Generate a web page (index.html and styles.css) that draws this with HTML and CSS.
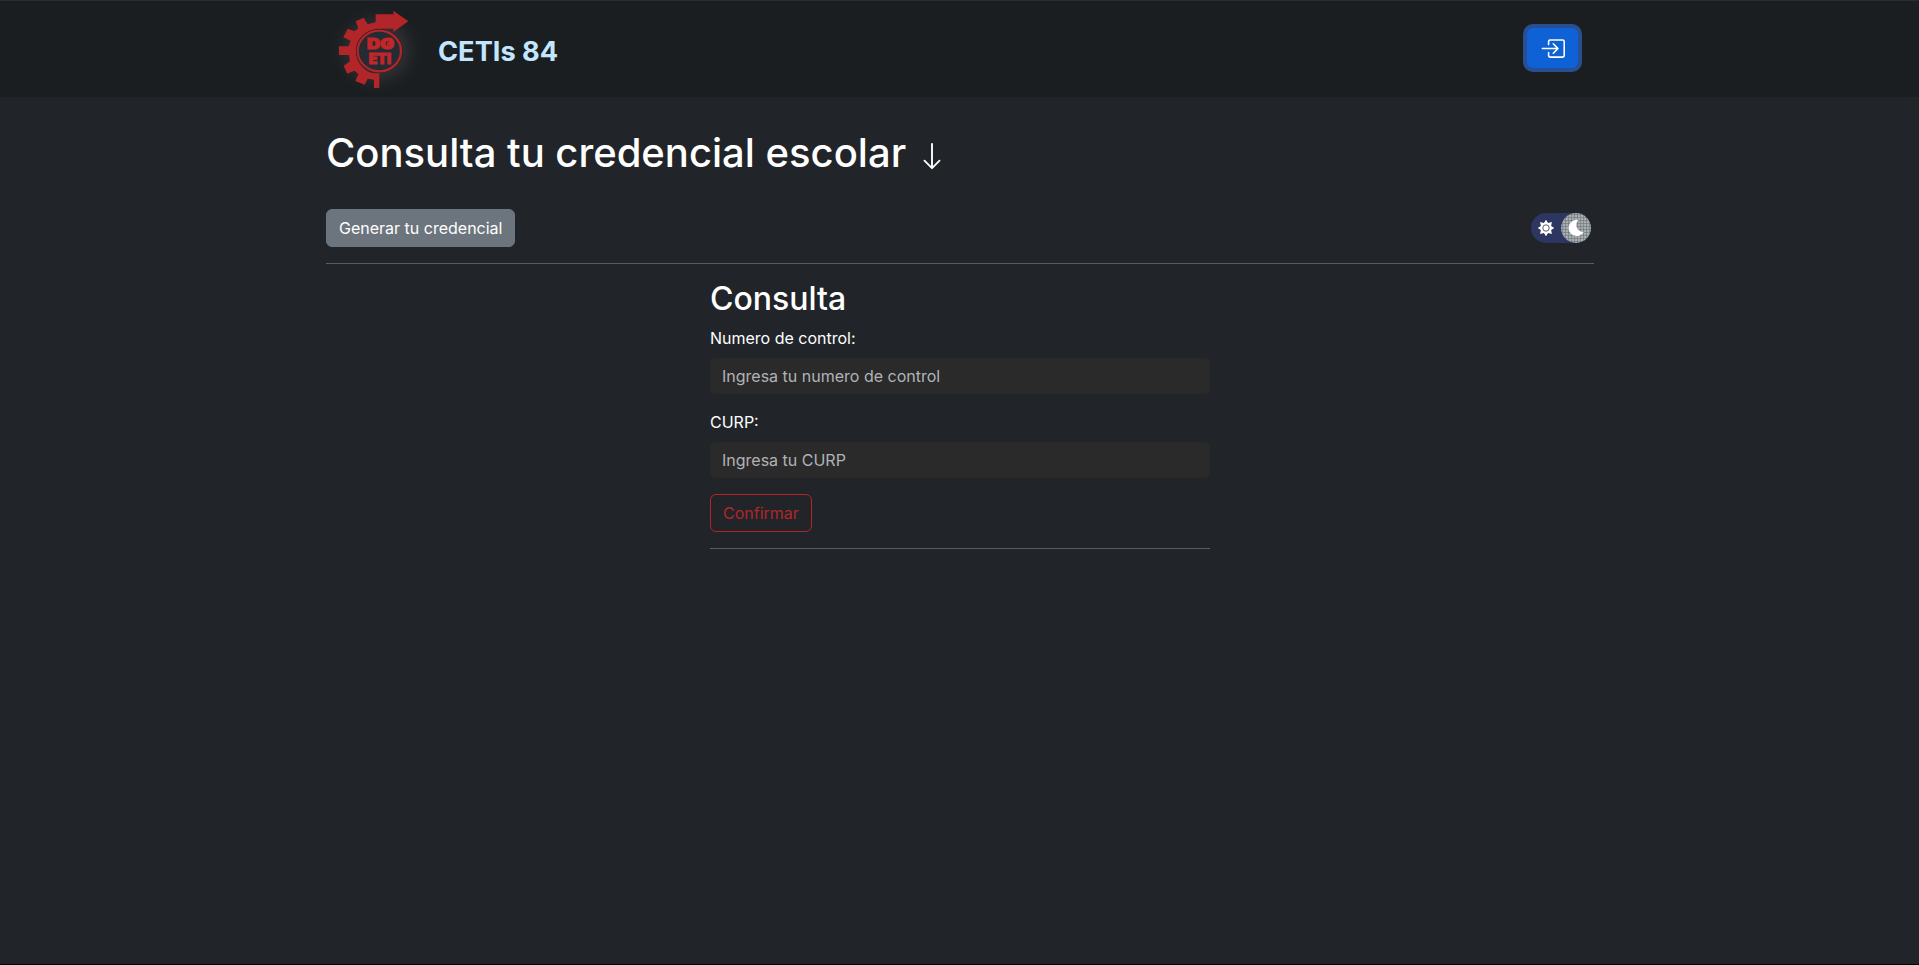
FILE: index.html
```
<!DOCTYPE html>
<html lang="es">
<head>
<meta charset="utf-8">
<title>CETIs 84</title>
<link rel="stylesheet" href="styles.css">
</head>
<body>
<header class="navbar">
  <div class="container navbar-inner">
    <a class="brand">
      <svg class="logo" viewBox="0 0 330 291" aria-hidden="true">
        <defs>
          <radialGradient id="glow">
            <stop offset="0" stop-color="#3c3b3f"/>
            <stop offset=".55" stop-color="#2c2d30"/>
            <stop offset="1" stop-color="#1b1e21" stop-opacity="0"/>
          </radialGradient>
        </defs>
        <ellipse cx="170" cy="150" rx="148" ry="138" fill="url(#glow)"/>
        <path fill="#b22528" d="M167 43H220V32L265 64L220 96V86H177C145 86 108 112 108 153C108 189 135 216 160 220H178V264H162V239L143 236L134 254L106 243L115 222L103 212L82 221L71 197L90 184L87 165H57V139H86L92 122L70 112L83 86L104 94L115 85L107 64L131 53L143 73L167 67Z"/>
        <ellipse cx="178" cy="153" rx="70" ry="66" fill="#1b1e21"/>
        <ellipse cx="178" cy="153" rx="65" ry="61" fill="#242b33" stroke="#b22528" stroke-width="7"/>
        <text class="logo-text" x="141" y="148" textLength="81" lengthAdjust="spacingAndGlyphs">DG</text>
        <text class="logo-text logo-text-small" x="146" y="191" textLength="67" lengthAdjust="spacingAndGlyphs">ETI</text>
      </svg>
      <span class="brand-name">CETIs 84</span>
    </a>
    <button class="login" aria-label="Entrar">
      <svg width="25" height="25" viewBox="0 0 16 16" fill="currentColor"><path fill-rule="evenodd" d="M6 3.5a.5.5 0 0 1 .5-.5h8a.5.5 0 0 1 .5.5v9a.5.5 0 0 1-.5.5h-8a.5.5 0 0 1-.5-.5v-2a.5.5 0 0 0-1 0v2A1.5 1.5 0 0 0 6.5 14h8a1.5 1.5 0 0 0 1.5-1.5v-9A1.5 1.5 0 0 0 14.5 2h-8A1.5 1.5 0 0 0 5 3.5v2a.5.5 0 0 0 1 0z"/><path fill-rule="evenodd" d="M11.854 8.354a.5.5 0 0 0 0-.708l-3-3a.5.5 0 1 0-.708.708L10.293 7.5H1.5a.5.5 0 0 0 0 1h8.793l-2.147 2.146a.5.5 0 0 0 .708.708z"/></svg>
    </button>
  </div>
</header>
<main class="container">
  <h1 class="title">Consulta tu credencial escolar
    <svg class="arrow" width="30" height="30" viewBox="0 0 16 16" fill="currentColor"><path fill-rule="evenodd" d="M8 1a.5.5 0 0 1 .5.5v11.793l3.146-3.147a.5.5 0 0 1 .708.708l-4 4a.5.5 0 0 1-.708 0l-4-4a.5.5 0 0 1 .708-.708L7.5 13.293V1.5A.5.5 0 0 1 8 1"/></svg>
  </h1>
  <div class="toolbar">
    <button class="btn btn-secondary">Generar tu credencial</button>
    <div class="toggle" role="switch" aria-checked="true">
      <svg class="sun" width="18" height="18" viewBox="0 0 18 18"><path fill="#fff" d="M9 .7 11.1 3.9 14.9 3.1 14.1 6.9 17.3 9 14.1 11.1 14.9 14.9 11.1 14.1 9 17.3 6.9 14.1 3.1 14.9 3.9 11.1.7 9 3.9 6.9 3.1 3.1 6.9 3.9Z"/><circle cx="9" cy="9" r="3.2" fill="#fff" stroke="#5a6172" stroke-width="1"/></svg>
      <span class="ball"><svg width="18" height="18" viewBox="0 0 18 18"><path fill="#fff" d="M11.3 1A8.1 8.1 0 1 0 16.7 13A7.1 7.1 0 0 1 11.3 1Z"/></svg></span>
    </div>
  </div>
  <form class="form">
    <h2 class="form-title">Consulta</h2>
    <label class="label" for="control">Numero de control:</label>
    <input class="input" id="control" type="text" placeholder="Ingresa tu numero de control">
    <label class="label" for="curp">CURP:</label>
    <input class="input" id="curp" type="text" placeholder="Ingresa tu CURP">
    <div class="actions"><button class="btn btn-outline" type="button">Confirmar</button></div>
  </form>
</main>
</body>
</html>
```
FILE: styles.css
```
* { box-sizing: border-box; }
body {
  margin: 0;
  height: 965px;
  overflow: hidden;
  background: #212529;
  border-bottom: 1px solid #000;
  color: #fff;
  font: 400 16px/24px Inter, sans-serif;
}
.container { width: 1268px; margin: 0 auto; padding: 0; position: relative; left: .5px; }
.navbar { height: 97px; background: #1b1e21; border-top: 1px solid #2b2b30; }
.navbar-inner { height: 94px; display: flex; justify-content: space-between; align-items: center; }
.brand { display: flex; align-items: center; height: 94px; }
.logo { width: 110px; height: 97px; margin: 0 0 0 -6px; flex: none; }
.logo-text { font: 900 45px Inter, sans-serif; fill: #c0262a; stroke: #c0262a; stroke-width: 3.5px; }
.logo-text-small { font-size: 42px; }
.brand-name { margin-left: 8px; padding-top: 8px; color: #c3e6ff; font-size: 27.2px; font-weight: 700; line-height: 42px; }
.login {
  display: flex; align-items: center; justify-content: center;
  width: 51px; height: 40px; margin-right: 16px; padding: 0;
  border: 0; border-radius: 6px; background: #0f62d6; color: #fff;
  box-shadow: 0 0 0 4px #284f94;
}
.title { margin: 32px 0 0; font-size: 40px; font-weight: 500; line-height: 48px; white-space: nowrap; }
.arrow { vertical-align: -4px; }
.toolbar {
  display: flex; justify-content: space-between; align-items: center;
  margin-top: 32px; padding: 0 3px 16px 0; border-bottom: 1px solid #595c5f;
}
.btn { height: 38px; padding: 6px 12px; border: 1px solid #6c757d; border-radius: 6px; font: inherit; color: #fff; }
.btn-secondary { background: #6c757d; }
.btn-outline { background: transparent; border-color: #b22528; color: #b22528; }
.toggle {
  display: flex; align-items: center; justify-content: space-between;
  width: 60px; height: 30px; padding-left: 6px; border-radius: 15px; background: #2c3660;
}
.ball {
  display: flex; align-items: center; justify-content: center;
  width: 30px; height: 30px; border-radius: 50%;
  background: radial-gradient(circle, #727d83 .9px, transparent 1.2px) 0 0 / 3px 3px, #a9adad;
}
.form { width: 500px; margin: 16px auto 0; padding-bottom: 16px; border-bottom: 1px solid #595c5f; }
.form-title { margin: 0 0 8px; font-size: 32px; font-weight: 500; line-height: 38px; }
.label { display: block; margin-bottom: 8px; }
.input {
  display: block; width: 100%; height: 36px; margin-bottom: 16px; padding: 6px 12px;
  border: 0; border-radius: 6px; background: #2a2a2b; color: #fff; font: inherit;
}
.input::placeholder { color: #b1b3b6; opacity: 1; }
.actions { display: flex; }
```
